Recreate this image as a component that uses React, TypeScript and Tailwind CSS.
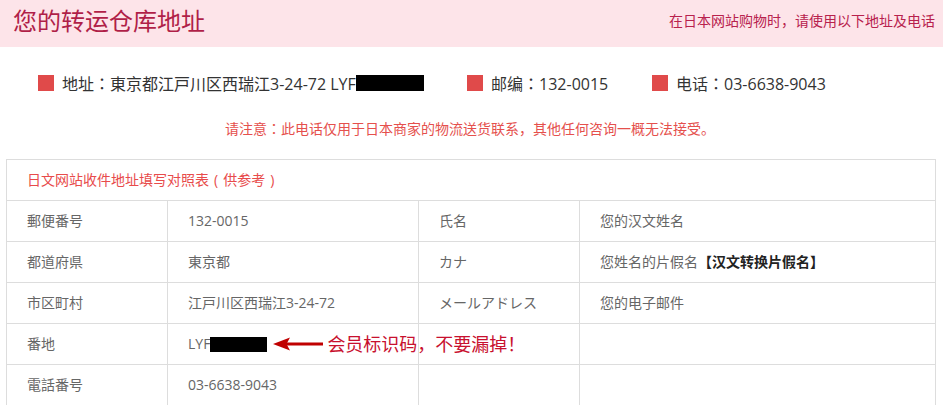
const font = { fontFamily: '"Open Sans", "Noto Sans CJK SC", sans-serif' }

// centred full-width colon, as in the reference
function Colon() {
  return <span style={{ fontFamily: '"Noto Sans CJK TC", sans-serif' }}>：</span>
}

function Square() {
  return <span className="mr-[8px] inline-block h-[16px] w-[16px] shrink-0 bg-[#e04a4a]" />
}

function Cell({ children, last }: { children?: React.ReactNode; last?: boolean }) {
  return (
    <div className={`flex items-center pl-[20px] text-[14px] text-[#666] ${last ? '' : 'border-r border-[#ddd]'}`}>
      {children}
    </div>
  )
}

function Row({ cells }: { cells: React.ReactNode[] }) {
  return (
    <div className="grid h-[41px] grid-cols-[161px_251px_161px_1fr] border-t border-[#ddd]">
      {cells.map((c, i) => (
        <Cell key={i} last={i === cells.length - 1}>
          {c}
        </Cell>
      ))}
    </div>
  )
}

function Arrow() {
  return (
    <svg width="50" height="14" viewBox="0 0 50 14" className="ml-[6px] mr-[4px]">
      <polygon points="0,7 17,0.5 13.5,7 17,13.5" fill="#c00000" />
      <rect x="13" y="5.5" width="37" height="3" fill="#c00000" />
    </svg>
  )
}

export default function App() {
  return (
    <div className="min-h-[405px] w-[943px] bg-white leading-none" style={font}>
      <div className="flex h-[47px] items-center justify-between bg-[#fde4e9] pb-[5px] pl-[13px] pr-[8px]">
        <h1 className="text-[24px] font-normal leading-[28px] text-[#b01f48]">您的转运仓库地址</h1>
        <p className="text-[14px] leading-[18px] text-[#b8214d]">在日本网站购物时，请使用以下地址及电话</p>
      </div>

      <div className="mt-[28px] flex h-[16px] items-center pl-[38px] text-[16px] text-[#333]">
        <div className="flex w-[429px] items-center">
          <Square />
          <span>
            地址<Colon />東京都江戸川区西瑞江3-24-72 LYF
          </span>
          <span className="inline-block h-[16px] w-[68px] bg-black" />
        </div>
        <div className="flex w-[185px] items-center">
          <Square />
          <span>
            邮编<Colon />132-0015
          </span>
        </div>
        <div className="flex items-center">
          <Square />
          <span>
            电话<Colon />03-6638-9043
          </span>
        </div>
      </div>

      <p className="mt-[27px] pl-[225px] text-[14px] leading-[20px] text-[#e5504d]">
        请注意<Colon />此电话仅用于日本商家的物流送货联系，其他任何咨询一概无法接受。
      </p>

      <div className="ml-[6px] mt-[20px] w-[930px] border border-[#ddd]">
        <div className="flex h-[40px] items-center pl-[20px] text-[14px] text-[#e84b4b]">
          日文网站收件地址填写对照表<span className="px-[5px]">(</span>供参考<span className="px-[5px]">)</span>
        </div>
        <Row cells={['郵便番号', '132-0015', '氏名', '您的汉文姓名']} />
        <Row
          cells={[
            '都道府県',
            '東京都',
            'カナ',
            <span key="k">
              您姓名的片假名<b className="font-bold text-[#222]">【汉文转换片假名】</b>
            </span>
          ]}
        />
        <Row cells={['市区町村', '江戸川区西瑞江3-24-72', 'メールアドレス', '您的电子邮件']} />
        <Row
          cells={[
            '番地',
            <span key="l" className="flex items-center whitespace-nowrap">
              LYF
              <span className="inline-block h-[15px] w-[57px] bg-black" />
              <Arrow />
              <span className="text-[18px] text-[#c8102e]">会员标识码，不要漏掉！</span>
            </span>,
            '',
            ''
          ]}
        />
        <Row cells={['電話番号', '03-6638-9043', '', '']} />
      </div>
    </div>
  )
}
